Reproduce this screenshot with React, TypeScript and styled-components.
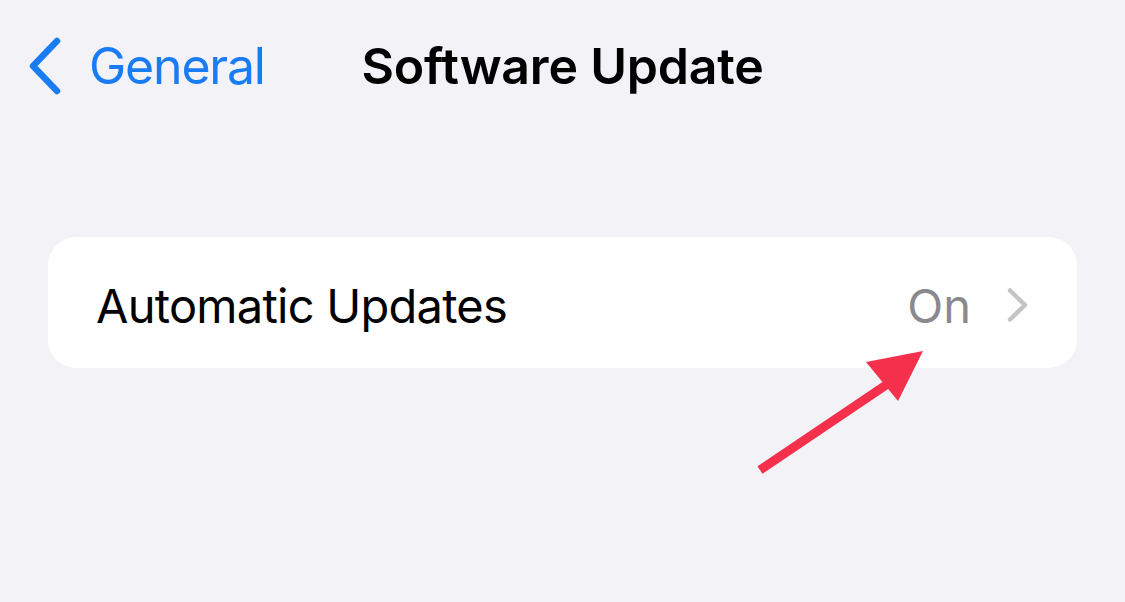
import React from "react";
import styled, { createGlobalStyle } from "styled-components";

const Global = createGlobalStyle`
  html, body { margin: 0; padding: 0; background: #f2f2f7; }
  body { font-family: Inter, "Noto Sans", sans-serif; -webkit-font-smoothing: antialiased; }
`;

const Page = styled.div`
  position: relative;
  width: 1125px;
  height: 602px;
  background: #f2f2f7;
  overflow: hidden;
`;

const NavBar = styled.header`
  display: grid;
  grid-template-columns: 1fr auto 1fr;
  align-items: center;
  height: 132px;
  padding: 0 28px;
  box-sizing: border-box;
`;

const BackButton = styled.button`
  display: flex;
  align-items: center;
  gap: 27px;
  border: 0;
  background: none;
  padding: 0;
  color: #1a7cf5;
  font-family: inherit;
  font-size: 50px;
  font-weight: 400;
  letter-spacing: -1.2px;
  justify-self: start;
  cursor: pointer;
`;

const Title = styled.h1`
  margin: 0;
  font-size: 50px;
  font-weight: 600;
  color: #000;
  letter-spacing: -0.2px;
`;

const Content = styled.main`
  padding: 105px 48px 0 48px;
`;

const Card = styled.section`
  background: #fff;
  border-radius: 28px;
  height: 131px;
  box-sizing: border-box;
  padding: 5px 48px 0 48px;
  display: flex;
  align-items: center;
`;

const RowLabel = styled.span`
  flex: 1;
  font-size: 47px;
  color: #000;
  letter-spacing: -0.75px;
`;

const RowValue = styled.span`
  font-size: 47px;
  color: #8a8a8e;
  margin-right: 36px;
`;

const ArrowOverlay = styled.svg`
  position: absolute;
  left: 0;
  top: 0;
  pointer-events: none;
`;

export default function App() {
  return (
    <Page>
      <Global />
      <NavBar>
        <BackButton>
          <svg width="34" height="60" viewBox="0 0 34 60">
            <path d="M29 5 L5 30 L29 55" fill="none" stroke="#1a7cf5" strokeWidth="6.5" strokeLinecap="round" strokeLinejoin="round" />
          </svg>
          General
        </BackButton>
        <Title>Software Update</Title>
        <div />
      </NavBar>
      <Content>
        <Card>
          <RowLabel>Automatic Updates</RowLabel>
          <RowValue>On</RowValue>
          <svg width="22" height="34" viewBox="0 0 22 34">
            <path d="M3 2.5 L18 17 L3 31.5" fill="none" stroke="#c4c4c7" strokeWidth="4.5" strokeLinecap="round" strokeLinejoin="round" />
          </svg>
        </Card>
      </Content>
      <ArrowOverlay width="1125" height="602" viewBox="0 0 1125 602">
        <line x1="760" y1="470" x2="892" y2="381" stroke="#f5304b" strokeWidth="9" strokeLinecap="butt" />
        <polygon points="923,351 866,362 898,401" fill="#f5304b" />
      </ArrowOverlay>
    </Page>
  );
}
